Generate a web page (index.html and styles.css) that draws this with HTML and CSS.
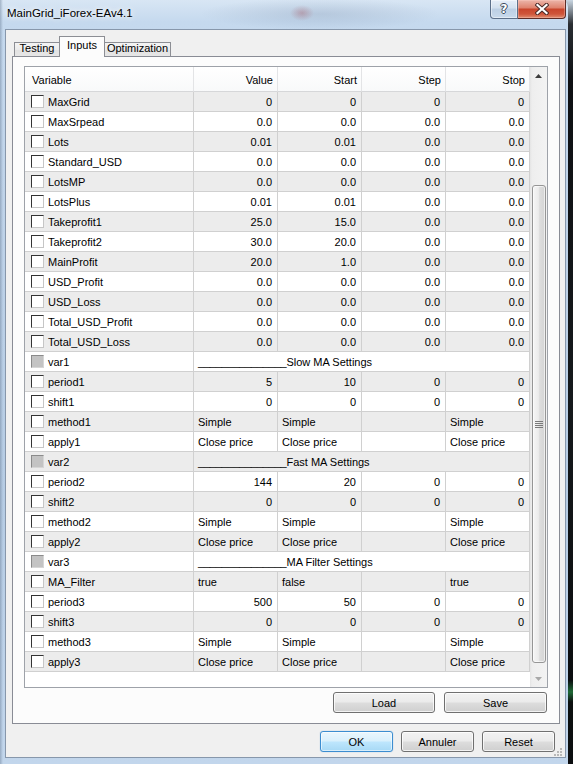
FILE: index.html
```html
<!DOCTYPE html>
<html>
<head>
<meta charset="utf-8">
<title>MainGrid_iForex-EAv4.1</title>
<link rel="stylesheet" href="styles.css">
</head>
<body>
<div class="window">
  <div class="titlebar">
    <div class="title">MainGrid_iForex-EAv4.1</div>
    <div class="caption">
      <div class="cap-help"><span class="qmark">?</span></div>
      <div class="cap-close">
        <svg width="14" height="12" viewBox="0 0 14 12"><path d="M2.5 2 L11.5 10 M11.5 2 L2.5 10" stroke="#4a2a28" stroke-width="4.2" stroke-linecap="square"/><path d="M2.5 2 L11.5 10 M11.5 2 L2.5 10" stroke="#ffffff" stroke-width="2.2" stroke-linecap="square"/></svg>
      </div>
    </div>
  </div>
  <div class="client">
    <div class="tabs">
      <div class="tab t1">Testing</div>
      <div class="tab t2 sel">Inputs</div>
      <div class="tab t3">Optimization</div>
    </div>
    <div class="panel">
      <div class="list">
        <div class="table">
          <div class="hrow">
            <div class="hc hl">Variable</div>
            <div class="hc">Value</div>
            <div class="hc">Start</div>
            <div class="hc">Step</div>
            <div class="hc">Stop</div>
          </div>
          <div class="row g"><div class="c v"><span class="cb"></span>MaxGrid</div><div class="c n">0</div><div class="c n">0</div><div class="c n">0</div><div class="c n">0</div></div>
          <div class="row"><div class="c v"><span class="cb"></span>MaxSrpead</div><div class="c n">0.0</div><div class="c n">0.0</div><div class="c n">0.0</div><div class="c n">0.0</div></div>
          <div class="row g"><div class="c v"><span class="cb"></span>Lots</div><div class="c n">0.01</div><div class="c n">0.01</div><div class="c n">0.0</div><div class="c n">0.0</div></div>
          <div class="row"><div class="c v"><span class="cb"></span>Standard_USD</div><div class="c n">0.0</div><div class="c n">0.0</div><div class="c n">0.0</div><div class="c n">0.0</div></div>
          <div class="row g"><div class="c v"><span class="cb"></span>LotsMP</div><div class="c n">0.0</div><div class="c n">0.0</div><div class="c n">0.0</div><div class="c n">0.0</div></div>
          <div class="row"><div class="c v"><span class="cb"></span>LotsPlus</div><div class="c n">0.01</div><div class="c n">0.01</div><div class="c n">0.0</div><div class="c n">0.0</div></div>
          <div class="row g"><div class="c v"><span class="cb"></span>Takeprofit1</div><div class="c n">25.0</div><div class="c n">15.0</div><div class="c n">0.0</div><div class="c n">0.0</div></div>
          <div class="row"><div class="c v"><span class="cb"></span>Takeprofit2</div><div class="c n">30.0</div><div class="c n">20.0</div><div class="c n">0.0</div><div class="c n">0.0</div></div>
          <div class="row g"><div class="c v"><span class="cb"></span>MainProfit</div><div class="c n">20.0</div><div class="c n">1.0</div><div class="c n">0.0</div><div class="c n">0.0</div></div>
          <div class="row"><div class="c v"><span class="cb"></span>USD_Profit</div><div class="c n">0.0</div><div class="c n">0.0</div><div class="c n">0.0</div><div class="c n">0.0</div></div>
          <div class="row g"><div class="c v"><span class="cb"></span>USD_Loss</div><div class="c n">0.0</div><div class="c n">0.0</div><div class="c n">0.0</div><div class="c n">0.0</div></div>
          <div class="row"><div class="c v"><span class="cb"></span>Total_USD_Profit</div><div class="c n">0.0</div><div class="c n">0.0</div><div class="c n">0.0</div><div class="c n">0.0</div></div>
          <div class="row g"><div class="c v"><span class="cb"></span>Total_USD_Loss</div><div class="c n">0.0</div><div class="c n">0.0</div><div class="c n">0.0</div><div class="c n">0.0</div></div>
          <div class="row"><div class="c v"><span class="cb dis"></span>var1</div><div class="c sp"><span class="us">_______________</span>Slow MA Settings</div></div>
          <div class="row g"><div class="c v"><span class="cb"></span>period1</div><div class="c n">5</div><div class="c n">10</div><div class="c n">0</div><div class="c n">0</div></div>
          <div class="row"><div class="c v"><span class="cb"></span>shift1</div><div class="c n">0</div><div class="c n">0</div><div class="c n">0</div><div class="c n">0</div></div>
          <div class="row g"><div class="c v"><span class="cb"></span>method1</div><div class="c">Simple</div><div class="c">Simple</div><div class="c"></div><div class="c">Simple</div></div>
          <div class="row"><div class="c v"><span class="cb"></span>apply1</div><div class="c">Close price</div><div class="c">Close price</div><div class="c"></div><div class="c">Close price</div></div>
          <div class="row g"><div class="c v"><span class="cb dis"></span>var2</div><div class="c sp"><span class="us">_______________</span>Fast MA Settings</div></div>
          <div class="row"><div class="c v"><span class="cb"></span>period2</div><div class="c n">144</div><div class="c n">20</div><div class="c n">0</div><div class="c n">0</div></div>
          <div class="row g"><div class="c v"><span class="cb"></span>shift2</div><div class="c n">0</div><div class="c n">0</div><div class="c n">0</div><div class="c n">0</div></div>
          <div class="row"><div class="c v"><span class="cb"></span>method2</div><div class="c">Simple</div><div class="c">Simple</div><div class="c"></div><div class="c">Simple</div></div>
          <div class="row g"><div class="c v"><span class="cb"></span>apply2</div><div class="c">Close price</div><div class="c">Close price</div><div class="c"></div><div class="c">Close price</div></div>
          <div class="row"><div class="c v"><span class="cb dis"></span>var3</div><div class="c sp"><span class="us">_______________</span>MA Filter Settings</div></div>
          <div class="row g"><div class="c v"><span class="cb"></span>MA_Filter</div><div class="c">true</div><div class="c">false</div><div class="c"></div><div class="c">true</div></div>
          <div class="row"><div class="c v"><span class="cb"></span>period3</div><div class="c n">500</div><div class="c n">50</div><div class="c n">0</div><div class="c n">0</div></div>
          <div class="row g"><div class="c v"><span class="cb"></span>shift3</div><div class="c n">0</div><div class="c n">0</div><div class="c n">0</div><div class="c n">0</div></div>
          <div class="row"><div class="c v"><span class="cb"></span>method3</div><div class="c">Simple</div><div class="c">Simple</div><div class="c"></div><div class="c">Simple</div></div>
          <div class="row g"><div class="c v"><span class="cb"></span>apply3</div><div class="c">Close price</div><div class="c">Close price</div><div class="c"></div><div class="c">Close price</div></div>
        </div>
        <div class="scroll">
          <div class="sb-btn"><svg width="7" height="4" viewBox="0 0 7 4"><path d="M0 4 L3.5 0 L7 4 Z" fill="#3c3c3c"/></svg></div>
          <div class="sb-track">
            <div class="thumb">
              <svg width="8" height="7" viewBox="0 0 8 7"><path d="M0 0.5 H8 M0 2.5 H8 M0 4.5 H8 M0 6.5 H8" stroke="#7a7a7a" stroke-width="1"/></svg>
            </div>
          </div>
          <div class="sb-btn"><svg width="7" height="4" viewBox="0 0 7 4"><path d="M0 0 L7 0 L3.5 4 Z" fill="#a8a8a8"/></svg></div>
        </div>
      </div>
      <div class="pbtns">
        <div class="btn load">Load</div>
        <div class="btn save">Save</div>
      </div>
    </div>
    <div class="dbtns">
      <div class="btn w73 def">OK</div>
      <div class="btn w73">Annuler</div>
      <div class="btn w73">Reset</div>
    </div>
    <div class="grip">
      <svg width="9" height="9" viewBox="0 0 9 9"><g fill="#b8b8b8"><rect x="7" y="1" width="2" height="2"/><rect x="4" y="4" width="2" height="2"/><rect x="7" y="4" width="2" height="2"/><rect x="1" y="7" width="2" height="2"/><rect x="4" y="7" width="2" height="2"/><rect x="7" y="7" width="2" height="2"/></g></svg>
    </div>
  </div>
</div>
</body>
</html>
```

FILE: styles.css
```css
* { box-sizing: border-box; }
html, body { margin: 0; padding: 0; }
body {
  width: 573px;
  height: 764px;
  overflow: hidden;
  display: flex;
  background: linear-gradient(to bottom, #c9d6e2 0, #2a2e33 24px, #0e1013 80px, #15191c 400px, #0b0d0f 680px, #1f6a36 692px, #0d1110 702px, #0b0d0f 764px);
  font-family: "Liberation Sans", Arial, sans-serif;
  font-size: 11px;
  color: #000;
}

.window {
  width: 568px;
  height: 764px;
  flex: none;
  display: flex;
  flex-direction: column;
  border-top-right-radius: 7px;
  background:
    radial-gradient(ellipse 12px 8px at 302px 13px, rgba(160, 60, 70, 0.3), transparent),
    radial-gradient(ellipse 120px 16px at 320px 14px, rgba(95, 115, 145, 0.2), transparent),
    linear-gradient(to right, rgba(100, 120, 145, 0.45) 0, rgba(100, 120, 145, 0) 3px),
    linear-gradient(to bottom, #d8e6f4 0, #c5d9ee 22px, #bfd3e9 200px, #b6cce4 500px, #c2d6ec 764px);
}

/* title bar */
.titlebar {
  height: 29px;
  flex: none;
  display: flex;
  align-items: flex-start;
}
.title {
  padding: 6px 0 0 7px;
  font-size: 11.5px;
  line-height: 14px;
  color: #000;
  text-shadow: 0 0 5px #ffffff, 0 0 9px rgba(255, 255, 255, 0.9);
}
.caption {
  margin-left: auto;
  margin-right: 2px;
  display: flex;
  height: 19px;
}
.cap-help {
  width: 28px;
  height: 19px;
  border: 1px solid #5d708a;
  border-top: none;
  border-radius: 0 0 0 4px;
  background: linear-gradient(#e6eef8 0, #d3e0ee 45%, #bccfe4 50%, #c9daec 100%);
  box-shadow: inset 0 0 0 1px rgba(255, 255, 255, 0.45);
  display: flex;
  align-items: center;
  justify-content: center;
}
.qmark {
  font-family: "DejaVu Sans", sans-serif;
  font-weight: bold;
  font-size: 12px;
  line-height: 12px;
  color: #ffffff;
  text-shadow: 1px 0 0 #3d4a5c, -1px 0 0 #3d4a5c, 0 1px 0 #3d4a5c, 0 -1px 0 #3d4a5c;
}
.cap-close {
  width: 48px;
  height: 19px;
  border: 1px solid #5e2c26;
  border-top: none;
  border-left: none;
  border-radius: 0 0 4px 0;
  background: linear-gradient(#ecb6aa 0, #df8571 42%, #c9462d 52%, #cf553a 78%, #e08d70 100%);
  box-shadow: inset 0 0 0 1px rgba(255, 210, 200, 0.35);
  display: flex;
  align-items: center;
  justify-content: center;
}

/* client area */
.client {
  margin: 0 2px 0 5px;
  height: 729px;
  flex: none;
  border: 1px solid #8797ab;
  background: #f0f0f0;
  display: flex;
  flex-direction: column;
  position: relative;
}

.tabs {
  display: flex;
  align-items: flex-end;
  height: 21px;
  margin: 6px 0 -1px 8px;
  position: relative;
  z-index: 1;
}
.tab {
  height: 14px;
  margin-bottom: 1px;
  border: 1px solid #8c8e94;
  border-bottom: none;
  background: linear-gradient(#f4f4f4 0, #ececec 50%, #e2e2e2 51%, #e6e6e6 100%);
  text-align: center;
  line-height: 10px;
  padding-top: 0;
  white-space: nowrap;
}
.tab.t1 { width: 46px; }
.tab.t2 { width: 46px; margin-left: -1px; }
.tab.t3 { width: 67px; margin-left: -1px; }
.tab.sel {
  height: 21px;
  margin-bottom: 0;
  background: #fcfcfc;
  line-height: 14px;
  padding-top: 1px;
  position: relative;
  z-index: 2;
}

.panel {
  margin: 0 5px 0 6px;
  height: 668px;
  flex: none;
  border: 1px solid #898c95;
  background: #fcfcfc;
  display: flex;
  flex-direction: column;
}

.list {
  margin: 9px 11px 0 11px;
  height: 622px;
  flex: none;
  border: 1px solid #9ea2a9;
  background: #ffffff;
  display: flex;
}
.table {
  width: 505px;
  display: flex;
  flex-direction: column;
}
.hrow,
.row {
  display: grid;
  grid-template-columns: 169px 84px 84px 84px 84px;
}
.hrow {
  height: 25px;
  background: linear-gradient(#ffffff, #f8f9fa);
}
.hc {
  border-right: 1px solid #e3e4e6;
  border-bottom: 1px solid #d6d7d9;
  line-height: 23px;
  padding: 2px 4px 0 4px;
  text-align: right;
  white-space: nowrap;
  overflow: hidden;
}
.hc.hl { text-align: left; padding-left: 7px; }

.row { height: 20px; background: #ffffff; }
.row.g { background: #ececec; }
.c {
  border-right: 1px solid #d0d0d0;
  border-bottom: 1px solid #d0d0d0;
  line-height: 21px;
  padding: 0 4px;
  white-space: nowrap;
  overflow: hidden;
}
.c.n { text-align: right; padding-right: 5px; }
.c.v {
  display: flex;
  align-items: flex-start;
  padding-left: 6px;
}
.c.sp { grid-column: 2 / 6; }
.us { letter-spacing: -0.22px; }
.cb {
  width: 13px;
  height: 13px;
  flex: none;
  margin: 3px 4px 0 0;
  border: 1px solid;
  border-color: #333333 #c6c6c6 #c6c6c6 #333333;
  background: #ffffff;
}
.cb.dis {
  background: #c3c3c3;
  border-color: #8a8a8a #d6d6d6 #d6d6d6 #8a8a8a;
}

/* scrollbar */
.scroll {
  width: 17px;
  display: flex;
  flex-direction: column;
  background: linear-gradient(to right, #e4e4e4 0, #eeeeee 2px, #f3f3f3 100%);
}
.sb-btn {
  height: 17px;
  flex: none;
  display: flex;
  align-items: center;
  justify-content: center;
}
.sb-track {
  flex: 1;
  padding-top: 101px;
}
.thumb {
  height: 478px;
  margin: 0 1px 0 2px;
  border: 1px solid #969696;
  border-radius: 3px;
  background: linear-gradient(to right, #f6f6f6 0, #ececec 45%, #dedede 55%, #d4d4d4 100%);
  box-shadow: inset 0 0 0 1px rgba(255, 255, 255, 0.6);
  display: flex;
  align-items: center;
  justify-content: center;
}

/* buttons */
.pbtns {
  display: flex;
  justify-content: flex-end;
  gap: 9px;
  margin: 4px 12px 0 0;
}
.dbtns {
  display: flex;
  justify-content: flex-end;
  gap: 8px;
  margin: 7px 10px 0 0;
}
.btn {
  height: 21px;
  border: 1px solid #707070;
  border-radius: 3px;
  background: linear-gradient(#f2f2f2 0, #ebebeb 48%, #dddddd 52%, #cfcfcf 100%);
  box-shadow: inset 0 0 0 1px rgba(255, 255, 255, 0.75);
  text-align: center;
  line-height: 19px;
  padding-top: 1px;
  white-space: nowrap;
  overflow: hidden;
}
.btn.load { width: 102px; }
.btn.save { width: 103px; }
.btn.w73 { width: 73px; }
.btn.def {
  border-color: #3c8dd0;
  background: linear-gradient(#eaf6fd 0, #d9f0fc 48%, #bee6fd 52%, #a7d9f5 100%);
  box-shadow: inset 0 0 0 1px rgba(255, 255, 255, 0.55), 0 0 1px rgba(60, 140, 210, 0.6);
}

.grip {
  position: absolute;
  right: 3px;
  bottom: 1px;
  width: 9px;
  height: 9px;
  display: flex;
}
```
